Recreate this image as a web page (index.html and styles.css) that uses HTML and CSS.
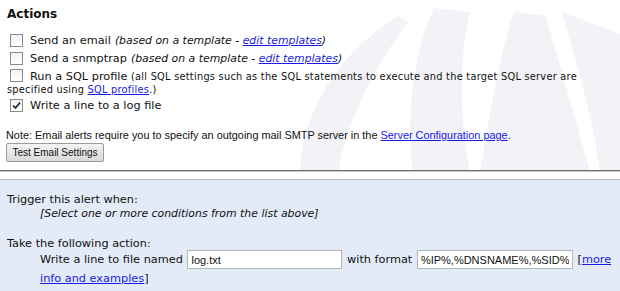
FILE: index.html
```html
<!DOCTYPE html>
<html lang="en">
<head>
  <meta charset="UTF-8" />
  <title>Alert Actions</title>
  <link rel="stylesheet" href="styles.css">
</head>
<body>
  <div class="page">
    <svg class="watermark" width="620" height="180" viewBox="0 0 620 180">
      <path d="M300 172 C302 110 340 52 398 16 L408 22 C372 70 348 120 338 172 Z" />
      <path d="M413 172 C406 110 414 52 434 8 L470 12 C458 62 460 120 470 172 Z" />
      <path d="M480 172 C490 112 500 52 514 12 L546 16 C562 72 578 128 590 172 Z" />
      <path d="M600 172 C592 112 576 62 562 12 L620 34 L620 172 Z" />
    </svg>

    <div class="actions">
      <h3>Actions</h3>
      <div class="opt"><span class="box"></span>Send an email <em>(based on a template - <a href="#">edit templates</a>)</em></div>
      <div class="opt"><span class="box"></span>Send a snmptrap <em>(based on a template - <a href="#">edit templates</a>)</em></div>
      <div class="opt sql"><span class="box"></span>Run a SQL profile <small>(all SQL settings such as the SQL statements to execute and the target SQL server are specified using <a href="#">SQL profiles</a>.)</small></div>
      <div class="opt"><span class="box checked"><svg width="9" height="9" viewBox="0 0 9 9"><path d="M1 4.5 L3.5 7 L8 1.5" fill="none" stroke="#222" stroke-width="1.7"/></svg></span>Write a line to a log file</div>

      <p class="note">Note: Email alerts require you to specify an outgoing mail SMTP server in the <a href="#">Server Configuration page</a>.</p>
      <button class="test-btn">Test Email Settings</button>
    </div>

    <div class="sep"></div>

    <div class="summary">
      <div class="label">Trigger this alert when:</div>
      <div class="indent"><em class="hint">[Select one or more conditions from the list above]</em></div>
      <div class="label gap">Take the following action:</div>
      <div class="indent action-line">Write a line to file named <input class="field file" type="text" value="log.txt"> with format <input class="field fmt" type="text" value="%IP%,%DNSNAME%,%SID%"> [<a href="#">more info and examples</a>]</div>
    </div>
  </div>
</body>
</html>
```

FILE: styles.css
```css
body {
  margin: 0;
  background: #fff;
  font-family: "DejaVu Sans", Verdana, sans-serif;
  font-size: 11.3px;
  color: #111;
}
a {
  color: #1a1ae6;
}
.page {
  position: relative;
  width: 620px;
  height: 291px;
  overflow: hidden;
}
.watermark {
  position: absolute;
  top: 0;
  left: 0;
  fill: #f2f2f7;
}
.actions {
  position: relative;
  padding: 7px 6px 0 7px;
  height: 163px;
}
.actions h3 {
  margin: 0 0 11px 0;
  font-size: 12px;
  font-weight: bold;
}
.opt {
  display: flex;
  align-items: center;
  flex-wrap: wrap;
  line-height: 17px;
  margin-bottom: 1px;
  padding-left: 3px;
}
.opt em {
  margin-left: 4px;
  font-size: 10.9px;
}
.opt.sql {
  display: block;
  line-height: 13px;
  margin-top: 2px;
  margin-bottom: 1px;
  padding-left: 0;
}
.opt.sql .box {
  margin-left: 3px;
  vertical-align: -2px;
  display: inline-flex;
}
.opt small {
  font-size: 9.8px;
  letter-spacing: 0.25px;
}
.box {
  width: 11px;
  height: 11px;
  border: 1px solid #8a8a8a;
  background: linear-gradient(#f2f2f2, #fff);
  margin-right: 7px;
  display: inline-flex;
  align-items: center;
  justify-content: center;
}
.note {
  margin: 14px 0 1px -1px;
  font-family: "Liberation Sans", Arial, sans-serif;
  font-size: 10.9px;
  line-height: 14px;
}
.test-btn {
  font-family: "Liberation Sans", Arial, sans-serif;
  font-size: 10px;
  color: #111;
  width: 98px;
  height: 19px;
  margin-left: -1px;
  padding: 0;
  border: 1px solid #9c9c9c;
  border-radius: 2px;
  background: linear-gradient(#f4f4f4, #e6e6e6 50%, #d9d9d9);
}
.sep {
  position: relative;
  height: 8px;
  border-top: 1px solid #6f6f6f;
  border-bottom: 1px solid #b9bec6;
  box-shadow: inset 0 1px 0 #c7c7c7;
}
.summary {
  background: #e2ebf7;
  padding: 13px 7px 0 7px;
  height: 120px;
  line-height: 14px;
}
.indent {
  padding-left: 33px;
}
.hint {
  font-size: 10.9px;
}
.label.gap {
  margin-top: 16px;
}
.action-line {
  line-height: 19px;
  margin-top: -1px;
}
.field {
  font-family: "Liberation Sans", Arial, sans-serif;
  font-size: 11px;
  height: 19px;
  box-sizing: border-box;
  border: 1px solid #b4b4b4;
  padding: 0 3px;
  vertical-align: top;
  margin: 0 1px;
  color: #111;
}
.field.file {
  width: 155px;
}
.field.fmt {
  width: 156px;
}
```
